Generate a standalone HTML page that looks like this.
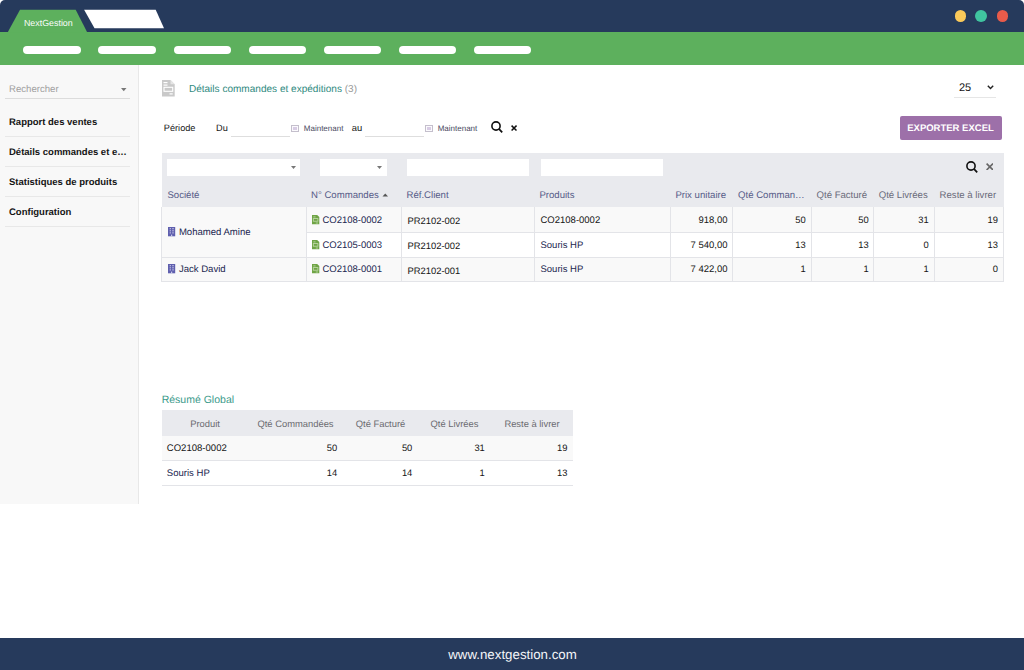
<!DOCTYPE html>
<html><head><meta charset="utf-8"><style>
html,body{margin:0;padding:0;}
body{width:1024px;height:670px;position:relative;overflow:hidden;background:#fff;font-family:"Liberation Sans",sans-serif;text-rendering:geometricPrecision;}
.t{position:absolute;white-space:nowrap;}
.r{position:absolute;}
</style></head><body>
<div class="r" style="left:0px;top:0px;width:1024px;height:32.4px;background:#263a5c;border-radius:5px 5px 0 0"></div>
<div class="r" style="left:0px;top:32.4px;width:1024px;height:32.4px;background:#5db05d"></div>
<svg class="r" style="left:0;top:0" width="200" height="40"><polygon points="7.6,32.5 20,9.8 75.7,9.8 87.3,32.5" fill="#5db05d"/><polygon points="84.1,9.8 155.7,9.8 164,28.3 94.5,28.3" fill="#fff"/></svg>
<div class="t" style="left:23.90px;transform-origin:0 0;top:19.26px;font-size:8.9px;line-height:8.9px;color:#fafcfa;font-weight:normal;">NextGestion</div>
<div class="r" style="left:23.3px;top:46px;width:57.3px;height:8px;background:#fff;border-radius:4px"></div>
<div class="r" style="left:98.39999999999999px;top:46px;width:57.3px;height:8px;background:#fff;border-radius:4px"></div>
<div class="r" style="left:173.5px;top:46px;width:57.3px;height:8px;background:#fff;border-radius:4px"></div>
<div class="r" style="left:248.6px;top:46px;width:57.3px;height:8px;background:#fff;border-radius:4px"></div>
<div class="r" style="left:323.7px;top:46px;width:57.3px;height:8px;background:#fff;border-radius:4px"></div>
<div class="r" style="left:398.8px;top:46px;width:57.3px;height:8px;background:#fff;border-radius:4px"></div>
<div class="r" style="left:473.9px;top:46px;width:57.3px;height:8px;background:#fff;border-radius:4px"></div>
<div class="r" style="left:954.6px;top:10.1px;width:11.8px;height:11.8px;background:#fac95a;border-radius:50%"></div>
<div class="r" style="left:975.3000000000001px;top:10.1px;width:11.8px;height:11.8px;background:#40c4a0;border-radius:50%"></div>
<div class="r" style="left:996.7px;top:10.1px;width:11.8px;height:11.8px;background:#e85b4a;border-radius:50%"></div>
<div class="r" style="left:0px;top:64.8px;width:138px;height:438.8px;background:#f8f8f8;border-right:1px solid #e8e8e8"></div>
<div class="t" style="left:9.00px;transform-origin:0 0;top:85.17px;font-size:9.6px;line-height:9.6px;color:#a0a0a0;font-weight:normal;">Rechercher</div>
<svg class="r" style="left:120.5px;top:88px" width="6" height="4"><polygon points="0,0 5.5,0 2.75,3.2" fill="#777"/></svg>
<div class="r" style="left:5px;top:98px;width:125px;height:1px;background:#dcdcdc"></div>
<div class="t" style="left:9.00px;transform-origin:0 0;top:118.06px;font-size:9.5px;line-height:9.5px;color:#151515;font-weight:bold;">Rapport des ventes</div>
<div class="r" style="left:5px;top:136px;width:125px;height:1px;background:#e8e8e8"></div>
<div class="t" style="left:9.00px;transform-origin:0 0;top:148.06px;font-size:9.5px;line-height:9.5px;color:#151515;font-weight:bold;">Détails commandes et e…</div>
<div class="r" style="left:5px;top:166px;width:125px;height:1px;background:#e8e8e8"></div>
<div class="t" style="left:9.00px;transform-origin:0 0;top:178.06px;font-size:9.5px;line-height:9.5px;color:#151515;font-weight:bold;">Statistiques de produits</div>
<div class="r" style="left:5px;top:196px;width:125px;height:1px;background:#e8e8e8"></div>
<div class="t" style="left:9.00px;transform-origin:0 0;top:208.06px;font-size:9.5px;line-height:9.5px;color:#151515;font-weight:bold;">Configuration</div>
<div class="r" style="left:5px;top:226px;width:125px;height:1px;background:#e8e8e8"></div>
<svg class="r" style="left:162px;top:80px" width="13" height="17" viewBox="0 0 13 17">
<path d="M0 0 H8.5 L12.7 4.2 V16.5 H0 Z" fill="#c9c9c9"/>
<path d="M8.5 0 V4.2 H12.7" fill="#e6e6e6"/>
<rect x="1.5" y="2" width="4" height="1.2" fill="#fff"/>
<rect x="1.5" y="4.5" width="4" height="1.2" fill="#fff"/>
<rect x="2" y="7.3" width="8.7" height="4" fill="none" stroke="#fff" stroke-width="1.1"/>
<rect x="7.5" y="13.3" width="3.2" height="1.2" fill="#fff"/>
</svg>
<div class="t" style="left:188.90px;transform-origin:0 0;top:85.29px;font-size:10.05px;line-height:10.05px;color:#2f8a80;font-weight:normal;">Détails commandes et expéditions <span style="color:#9a9a9a">(3)</span></div>
<div class="t" style="left:959.00px;transform-origin:0 0;top:83.09px;font-size:11px;line-height:11px;color:#151515;font-weight:normal;">25</div>
<svg class="r" style="left:987px;top:85px" width="7" height="5"><polyline points="0.8,0.8 3.5,3.6 6.2,0.8" fill="none" stroke="#222" stroke-width="1.4"/></svg>
<div class="r" style="left:954px;top:97px;width:42px;height:1px;background:#e6e6e6"></div>
<div class="t" style="left:163.80px;transform-origin:0 0;top:124.01px;font-size:9.2px;line-height:9.2px;color:#151515;font-weight:normal;">Période</div>
<div class="t" style="left:216.00px;transform-origin:0 0;top:123.81px;font-size:9.2px;line-height:9.2px;color:#151515;font-weight:normal;">Du</div>
<div class="r" style="left:231px;top:136px;width:59px;height:1px;background:#dedede"></div>
<div class="r" style="left:291px;top:124.7px;width:8px;height:7px;background:#fbfafd;border:1px solid #c4bfcc;box-sizing:border-box"></div>
<div class="r" style="left:293px;top:126.7px;width:3.5px;height:3px;background:#d8cce4"></div>
<div class="t" style="left:303.80px;transform-origin:0 0;top:124.73px;font-size:8px;line-height:8px;color:#4a4a62;font-weight:normal;">Maintenant</div>
<div class="t" style="left:351.70px;transform-origin:0 0;top:123.14px;font-size:9.4px;line-height:9.4px;color:#151515;font-weight:normal;">au</div>
<div class="r" style="left:365px;top:136px;width:59px;height:1px;background:#dedede"></div>
<div class="r" style="left:425.4px;top:124.7px;width:8px;height:7px;background:#fbfafd;border:1px solid #c4bfcc;box-sizing:border-box"></div>
<div class="r" style="left:427.4px;top:126.7px;width:3.5px;height:3px;background:#d8cce4"></div>
<div class="t" style="left:437.70px;transform-origin:0 0;top:124.73px;font-size:8px;line-height:8px;color:#4a4a62;font-weight:normal;">Maintenant</div>
<svg class="r" style="left:491px;top:121.4px" width="13" height="13" viewBox="0 0 13 13"><circle cx="5" cy="5" r="4.1" fill="none" stroke="#111" stroke-width="1.6"/><line x1="7.9" y1="7.9" x2="11.2" y2="11.4" stroke="#111" stroke-width="1.7"/></svg>
<svg class="r" style="left:511px;top:125.2px" width="6.1" height="6.1"><line x1="0.6" y1="0.6" x2="5.5" y2="5.5" stroke="#111" stroke-width="1.5"/><line x1="5.5" y1="0.6" x2="0.6" y2="5.5" stroke="#111" stroke-width="1.5"/></svg>
<div class="r" style="left:900px;top:116px;width:101.5px;height:24px;background:#9d70a9;border-radius:2px"></div>
<div class="t" style="left:850.50px;width:200px;text-align:center;transform-origin:50% 0;top:123.86px;font-size:9.5px;line-height:9.5px;color:#fff;font-weight:bold;">EXPORTER EXCEL</div>
<div class="r" style="left:161.5px;top:153px;width:842px;height:54.4px;background:#e9eaee"></div>
<div class="r" style="left:166.5px;top:158.5px;width:133.5px;height:17.5px;background:#fff"></div>
<svg class="r" style="left:290.7px;top:166.2px" width="6" height="4"><polygon points="0,0 5,0 2.5,3" fill="#777"/></svg>
<div class="r" style="left:320px;top:158.5px;width:66.5px;height:17.5px;background:#fff"></div>
<svg class="r" style="left:377.4px;top:166.2px" width="6" height="4"><polygon points="0,0 5,0 2.5,3" fill="#777"/></svg>
<div class="r" style="left:406.5px;top:158.5px;width:122px;height:17.5px;background:#fff"></div>
<div class="r" style="left:540.5px;top:158.5px;width:122px;height:17.5px;background:#fff"></div>
<svg class="r" style="left:965.9px;top:160.8px" width="13" height="13" viewBox="0 0 13 13"><circle cx="5" cy="5" r="4.1" fill="none" stroke="#111" stroke-width="1.6"/><line x1="7.9" y1="7.9" x2="11.2" y2="11.4" stroke="#111" stroke-width="1.7"/></svg>
<svg class="r" style="left:985.8px;top:162.9px" width="7.6" height="7.6"><line x1="0.6" y1="0.6" x2="7.0" y2="7.0" stroke="#666" stroke-width="1.6"/><line x1="7.0" y1="0.6" x2="0.6" y2="7.0" stroke="#666" stroke-width="1.6"/></svg>
<div class="t" style="left:167.40px;transform-origin:0 0;top:190.67px;font-size:9.6px;line-height:9.6px;color:#565b88;font-weight:normal;">Société</div>
<div class="t" style="left:311.00px;transform-origin:0 0;top:190.67px;font-size:9.6px;line-height:9.6px;color:#565b88;font-weight:normal;">N° Commandes <svg width="7" height="4" style="vertical-align:1px;margin-left:1px"><polygon points="0.5,3.5 6,3.5 3.25,0.5" fill="#555"/></svg></div>
<div class="t" style="left:406.50px;transform-origin:0 0;top:190.67px;font-size:9.6px;line-height:9.6px;color:#565b88;font-weight:normal;">Réf.Client</div>
<div class="t" style="left:539.40px;transform-origin:0 0;top:190.67px;font-size:9.6px;line-height:9.6px;color:#565b88;font-weight:normal;">Produits</div>
<div class="t" style="left:675.40px;transform-origin:0 0;top:190.67px;font-size:9.6px;line-height:9.6px;color:#565b88;font-weight:normal;">Prix unitaire</div>
<div class="t" style="left:738.00px;transform-origin:0 0;top:190.67px;font-size:9.6px;line-height:9.6px;color:#565b88;font-weight:normal;">Qté Comman…</div>
<div class="t" style="left:816.50px;transform-origin:0 0;top:190.67px;font-size:9.6px;line-height:9.6px;color:#6a6a7a;font-weight:normal;">Qté Facturé</div>
<div class="t" style="left:878.70px;transform-origin:0 0;top:190.67px;font-size:9.6px;line-height:9.6px;color:#6a6a7a;font-weight:normal;">Qté Livrées</div>
<div class="t" style="left:939.60px;transform-origin:0 0;top:190.67px;font-size:9.6px;line-height:9.6px;color:#6a6a7a;font-weight:normal;">Reste à livrer</div>
<div class="r" style="left:161.5px;top:207px;width:145px;height:50.3px;background:#f9f9f9"></div>
<div class="r" style="left:306.5px;top:207px;width:696.5px;height:25.3px;background:#f9f9f9"></div>
<div class="r" style="left:306.5px;top:232.3px;width:696.5px;height:25px;background:#fff"></div>
<div class="r" style="left:161.5px;top:257.3px;width:841.5px;height:24px;background:#f9f9f9"></div>
<div class="r" style="left:306.5px;top:232px;width:696.5px;height:1px;background:#e3e4e8"></div>
<div class="r" style="left:161.5px;top:257px;width:841.5px;height:1px;background:#e3e4e8"></div>
<div class="r" style="left:161.5px;top:281px;width:841.5px;height:1px;background:#e3e4e8"></div>
<div class="r" style="left:161.0px;top:207px;width:1px;height:74.5px;background:#e3e4e8"></div>
<div class="r" style="left:306.0px;top:207px;width:1px;height:74.5px;background:#e3e4e8"></div>
<div class="r" style="left:401.0px;top:207px;width:1px;height:74.5px;background:#e3e4e8"></div>
<div class="r" style="left:534.0px;top:207px;width:1px;height:74.5px;background:#e3e4e8"></div>
<div class="r" style="left:670.0px;top:207px;width:1px;height:74.5px;background:#e3e4e8"></div>
<div class="r" style="left:732.0px;top:207px;width:1px;height:74.5px;background:#e3e4e8"></div>
<div class="r" style="left:811.0px;top:207px;width:1px;height:74.5px;background:#e3e4e8"></div>
<div class="r" style="left:873.0px;top:207px;width:1px;height:74.5px;background:#e3e4e8"></div>
<div class="r" style="left:934.0px;top:207px;width:1px;height:74.5px;background:#e3e4e8"></div>
<div class="r" style="left:1002.5px;top:207px;width:1px;height:74.5px;background:#e3e4e8"></div>
<svg class="r" style="left:168px;top:227px" width="8" height="10" viewBox="0 0 8 10"><rect x="0" y="0" width="7.2" height="9.3" fill="#5f5fae"/><g fill="#d8d8f0"><rect x="1.7" y="1.2" width="1.2" height="1"/><rect x="4.3" y="1.2" width="1.4" height="1"/><rect x="1.7" y="3.3" width="1.2" height="1"/><rect x="4.3" y="3.3" width="1.4" height="1"/><rect x="1.7" y="5.4" width="1.2" height="1"/><rect x="4.3" y="5.4" width="1.4" height="1"/><rect x="3.1" y="7.6" width="1.1" height="1.7"/></g></svg>
<div class="t" style="left:178.90px;transform-origin:0 0;top:228.01px;font-size:9.55px;line-height:9.55px;color:#222650;font-weight:normal;">Mohamed Amine</div>
<svg class="r" style="left:168px;top:264px" width="8" height="10" viewBox="0 0 8 10"><rect x="0" y="0" width="7.2" height="9.3" fill="#5f5fae"/><g fill="#d8d8f0"><rect x="1.7" y="1.2" width="1.2" height="1"/><rect x="4.3" y="1.2" width="1.4" height="1"/><rect x="1.7" y="3.3" width="1.2" height="1"/><rect x="4.3" y="3.3" width="1.4" height="1"/><rect x="1.7" y="5.4" width="1.2" height="1"/><rect x="4.3" y="5.4" width="1.4" height="1"/><rect x="3.1" y="7.6" width="1.1" height="1.7"/></g></svg>
<div class="t" style="left:178.90px;transform-origin:0 0;top:265.41px;font-size:9.55px;line-height:9.55px;color:#222650;font-weight:normal;">Jack David</div>
<svg class="r" style="left:312px;top:214.8px" width="8" height="10" viewBox="0 0 8 10"><path d="M0 0 H5.2 L7.3 2.1 V9.2 H0 Z" fill="#6fa445"/><g fill="#c4dcae"><rect x="1.3" y="1.5" width="2.2" height=".8"/><rect x="1.3" y="3.6" width="4.6" height="2.6" fill="none" stroke="#c4dcae" stroke-width=".8"/><rect x="3.8" y="7.6" width="2.2" height=".8"/></g></svg>
<div class="t" style="left:322.40px;transform-origin:0 0;top:215.76px;font-size:9.5px;line-height:9.5px;color:#222650;font-weight:normal;">CO2108-0002</div>
<div class="t" style="left:407.50px;transform-origin:0 0;top:216.04px;font-size:9.4px;line-height:9.4px;color:#151515;font-weight:normal;">PR2102-002</div>
<div class="t" style="left:540.50px;transform-origin:0 0;top:215.76px;font-size:9.5px;line-height:9.5px;color:#151515;font-weight:normal;">CO2108-0002</div>
<div class="t" style="right:296.50px;transform-origin:100% 0;top:215.56px;font-size:9.5px;line-height:9.5px;color:#151515;font-weight:normal;">918,00</div>
<div class="t" style="right:218.30px;transform-origin:100% 0;top:214.94px;font-size:9.4px;line-height:9.4px;color:#151515;font-weight:normal;">50</div>
<div class="t" style="right:155.40px;transform-origin:100% 0;top:214.94px;font-size:9.4px;line-height:9.4px;color:#151515;font-weight:normal;">50</div>
<div class="t" style="right:95.30px;transform-origin:100% 0;top:214.94px;font-size:9.4px;line-height:9.4px;color:#151515;font-weight:normal;">31</div>
<div class="t" style="right:26.10px;transform-origin:100% 0;top:214.94px;font-size:9.4px;line-height:9.4px;color:#151515;font-weight:normal;">19</div>
<svg class="r" style="left:312px;top:239.8px" width="8" height="10" viewBox="0 0 8 10"><path d="M0 0 H5.2 L7.3 2.1 V9.2 H0 Z" fill="#6fa445"/><g fill="#c4dcae"><rect x="1.3" y="1.5" width="2.2" height=".8"/><rect x="1.3" y="3.6" width="4.6" height="2.6" fill="none" stroke="#c4dcae" stroke-width=".8"/><rect x="3.8" y="7.6" width="2.2" height=".8"/></g></svg>
<div class="t" style="left:322.40px;transform-origin:0 0;top:240.76px;font-size:9.5px;line-height:9.5px;color:#222650;font-weight:normal;">CO2105-0003</div>
<div class="t" style="left:407.50px;transform-origin:0 0;top:241.04px;font-size:9.4px;line-height:9.4px;color:#151515;font-weight:normal;">PR2102-002</div>
<div class="t" style="left:540.50px;transform-origin:0 0;top:240.76px;font-size:9.5px;line-height:9.5px;color:#222650;font-weight:normal;">Souris HP</div>
<div class="t" style="right:296.50px;transform-origin:100% 0;top:240.56px;font-size:9.5px;line-height:9.5px;color:#151515;font-weight:normal;">7 540,00</div>
<div class="t" style="right:218.30px;transform-origin:100% 0;top:239.94px;font-size:9.4px;line-height:9.4px;color:#151515;font-weight:normal;">13</div>
<div class="t" style="right:155.40px;transform-origin:100% 0;top:239.94px;font-size:9.4px;line-height:9.4px;color:#151515;font-weight:normal;">13</div>
<div class="t" style="right:95.30px;transform-origin:100% 0;top:239.94px;font-size:9.4px;line-height:9.4px;color:#151515;font-weight:normal;">0</div>
<div class="t" style="right:26.10px;transform-origin:100% 0;top:239.94px;font-size:9.4px;line-height:9.4px;color:#151515;font-weight:normal;">13</div>
<svg class="r" style="left:312px;top:264.29999999999995px" width="8" height="10" viewBox="0 0 8 10"><path d="M0 0 H5.2 L7.3 2.1 V9.2 H0 Z" fill="#6fa445"/><g fill="#c4dcae"><rect x="1.3" y="1.5" width="2.2" height=".8"/><rect x="1.3" y="3.6" width="4.6" height="2.6" fill="none" stroke="#c4dcae" stroke-width=".8"/><rect x="3.8" y="7.6" width="2.2" height=".8"/></g></svg>
<div class="t" style="left:322.40px;transform-origin:0 0;top:265.26px;font-size:9.5px;line-height:9.5px;color:#222650;font-weight:normal;">CO2108-0001</div>
<div class="t" style="left:407.50px;transform-origin:0 0;top:265.54px;font-size:9.4px;line-height:9.4px;color:#151515;font-weight:normal;">PR2102-001</div>
<div class="t" style="left:540.50px;transform-origin:0 0;top:265.26px;font-size:9.5px;line-height:9.5px;color:#222650;font-weight:normal;">Souris HP</div>
<div class="t" style="right:296.50px;transform-origin:100% 0;top:265.06px;font-size:9.5px;line-height:9.5px;color:#151515;font-weight:normal;">7 422,00</div>
<div class="t" style="right:218.30px;transform-origin:100% 0;top:264.44px;font-size:9.4px;line-height:9.4px;color:#151515;font-weight:normal;">1</div>
<div class="t" style="right:155.40px;transform-origin:100% 0;top:264.44px;font-size:9.4px;line-height:9.4px;color:#151515;font-weight:normal;">1</div>
<div class="t" style="right:95.30px;transform-origin:100% 0;top:264.44px;font-size:9.4px;line-height:9.4px;color:#151515;font-weight:normal;">1</div>
<div class="t" style="right:26.10px;transform-origin:100% 0;top:264.44px;font-size:9.4px;line-height:9.4px;color:#151515;font-weight:normal;">0</div>
<div class="t" style="left:161.70px;transform-origin:0 0;top:395.31px;font-size:10.5px;line-height:10.5px;color:#3a9a8a;font-weight:normal;">Résumé Global</div>
<div class="r" style="left:161.7px;top:410.2px;width:411.5px;height:26px;background:#e9eaee"></div>
<div class="t" style="left:105.00px;width:200px;text-align:center;transform-origin:50% 0;top:419.04px;font-size:9.4px;line-height:9.4px;color:#6b6b70;font-weight:normal;">Produit</div>
<div class="t" style="left:195.50px;width:200px;text-align:center;transform-origin:50% 0;top:419.04px;font-size:9.4px;line-height:9.4px;color:#6b6b70;font-weight:normal;">Qté Commandées</div>
<div class="t" style="left:280.50px;width:200px;text-align:center;transform-origin:50% 0;top:419.04px;font-size:9.4px;line-height:9.4px;color:#6b6b70;font-weight:normal;">Qté Facturé</div>
<div class="t" style="left:354.50px;width:200px;text-align:center;transform-origin:50% 0;top:419.04px;font-size:9.4px;line-height:9.4px;color:#6b6b70;font-weight:normal;">Qté Livrées</div>
<div class="t" style="left:432.00px;width:200px;text-align:center;transform-origin:50% 0;top:419.04px;font-size:9.4px;line-height:9.4px;color:#6b6b70;font-weight:normal;">Reste à livrer</div>
<div class="r" style="left:161.7px;top:436.2px;width:411.5px;height:23.6px;background:#f9f9f9"></div>
<div class="r" style="left:161.7px;top:459.6px;width:411.5px;height:1px;background:#e3e4e8"></div>
<div class="r" style="left:161.7px;top:485.3px;width:411.5px;height:1px;background:#e3e4e8"></div>
<div class="t" style="left:166.80px;transform-origin:0 0;top:444.41px;font-size:9.55px;line-height:9.55px;color:#151515;font-weight:normal;">CO2108-0002</div>
<div class="t" style="left:166.80px;transform-origin:0 0;top:468.71px;font-size:9.55px;line-height:9.55px;color:#222650;font-weight:normal;">Souris HP</div>
<div class="t" style="right:686.90px;transform-origin:100% 0;top:442.64px;font-size:9.4px;line-height:9.4px;color:#151515;font-weight:normal;">50</div>
<div class="t" style="right:611.70px;transform-origin:100% 0;top:442.64px;font-size:9.4px;line-height:9.4px;color:#151515;font-weight:normal;">50</div>
<div class="t" style="right:539.20px;transform-origin:100% 0;top:442.64px;font-size:9.4px;line-height:9.4px;color:#151515;font-weight:normal;">31</div>
<div class="t" style="right:456.50px;transform-origin:100% 0;top:442.64px;font-size:9.4px;line-height:9.4px;color:#151515;font-weight:normal;">19</div>
<div class="t" style="right:686.90px;transform-origin:100% 0;top:467.64px;font-size:9.4px;line-height:9.4px;color:#151515;font-weight:normal;">14</div>
<div class="t" style="right:611.70px;transform-origin:100% 0;top:467.64px;font-size:9.4px;line-height:9.4px;color:#151515;font-weight:normal;">14</div>
<div class="t" style="right:539.20px;transform-origin:100% 0;top:467.64px;font-size:9.4px;line-height:9.4px;color:#151515;font-weight:normal;">1</div>
<div class="t" style="right:456.50px;transform-origin:100% 0;top:467.64px;font-size:9.4px;line-height:9.4px;color:#151515;font-weight:normal;">13</div>
<div class="r" style="left:0px;top:638px;width:1024px;height:32px;background:#263a5c"></div>
<div class="t" style="left:412.50px;width:200px;text-align:center;transform-origin:50% 0;top:648.04px;font-size:13.3px;line-height:13.3px;color:#f4f5f8;font-weight:normal;">www.nextgestion.com</div>
</body></html>
